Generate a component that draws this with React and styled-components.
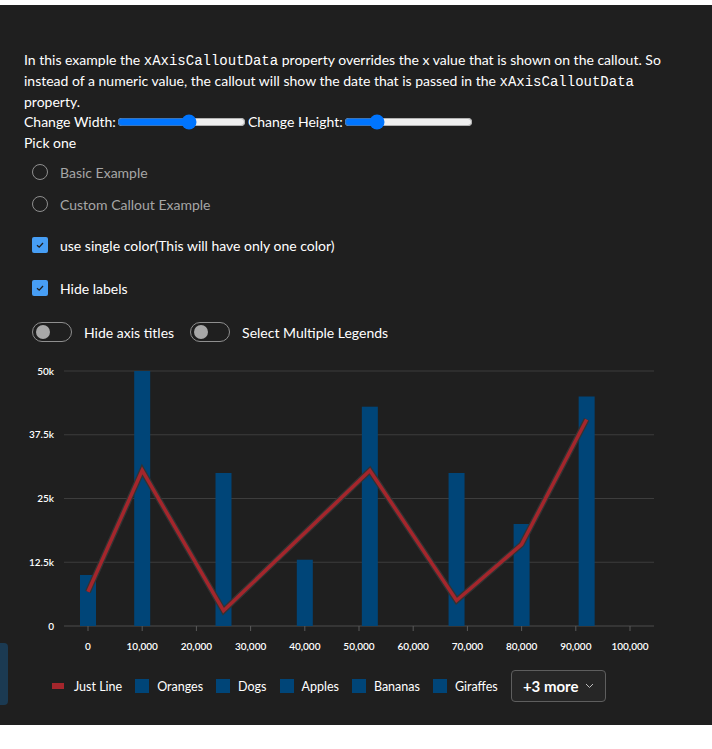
import React from "react";
import styled, { createGlobalStyle } from "styled-components";

const GlobalStyle = createGlobalStyle`
  html, body {
    margin: 0;
    padding: 0;
    background: #ffffff;
  }
  body {
    font-family: "Segoe UI", Lato, "Open Sans", sans-serif;
  }
`;

const Page = styled.div`
  padding-top: 5px;
  width: 712px;
`;

const Panel = styled.div`
  position: relative;
  height: 720px;
  background: #1f1f1f;
  color: #ffffff;
  font-size: 14px;
  box-sizing: border-box;
  padding-top: 44px;
`;

const Content = styled.div`
  padding: 0 24px;
  display: flex;
  flex-direction: column;
`;

const Intro = styled.p`
  margin: 0;
  line-height: 21px;
`;

const Code = styled.code`
  font-family: "Liberation Mono", "Courier New", monospace;
  font-size: 14px;
  line-height: 1;
`;

const SliderRow = styled.div`
  display: flex;
  align-items: center;
  height: 20px;
  line-height: 20px;
`;

const Range = styled.input`
  width: 129px;
  height: 16px;
  margin: 0 2px 0 1px;
`;

const Label = styled.div`
  line-height: 21px;
`;

const RadioGroup = styled.div`
  display: flex;
  flex-direction: column;
  margin-top: 3px;
  padding-left: 8px;
`;

const RadioRow = styled.div`
  display: flex;
  align-items: center;
  height: 32px;
  color: #a6a6a6;
`;

const RadioCircle = styled.span`
  width: 14px;
  height: 14px;
  border: 1px solid #8f8f8f;
  border-radius: 50%;
  margin-right: 12px;
`;

const CheckRow = styled.div`
  display: flex;
  align-items: center;
  height: 20px;
  padding-left: 8px;
  margin-top: ${(p) => p.$gap}px;
`;

const CheckBox = styled.span`
  width: 16px;
  height: 16px;
  border-radius: 2px;
  background: #479ef5;
  margin-right: 12px;
  display: flex;
  align-items: center;
  justify-content: center;
`;

const ToggleRow = styled.div`
  display: flex;
  align-items: center;
  height: 20px;
  padding-left: 8px;
  margin-top: 24px;
`;

const Toggle = styled.span`
  box-sizing: border-box;
  width: 40px;
  height: 20px;
  border: 1px solid #8f8f8f;
  border-radius: 10px;
  display: flex;
  align-items: center;
  padding-left: 3px;
  margin-right: 12px;
  &::after {
    content: "";
    width: 14px;
    height: 14px;
    border-radius: 50%;
    background: #a8a8a8;
  }
`;

const ToggleLabel = styled.span`
  margin-right: 16px;
`;

const Chart = styled.svg`
  display: block;
  margin-top: 13px;
`;

const Legend = styled.div`
  display: flex;
  align-items: center;
  height: 32px;
  margin-top: 15px;
  padding-left: 52px;
  font-size: 12.5px;
`;

const LegendItem = styled.div`
  display: flex;
  align-items: center;
  margin-right: 13px;
`;

const Swatch = styled.span`
  width: ${(p) => (p.$line ? 12 : 14)}px;
  height: ${(p) => (p.$line ? 6 : 14)}px;
  background: ${(p) => p.$color};
  margin-right: ${(p) => (p.$line ? 10 : 8)}px;
`;

const MoreButton = styled.div`
  box-sizing: border-box;
  height: 32px;
  width: 95px;
  border: 1px solid #5e5e5e;
  border-radius: 4px;
  background: #262626;
  display: flex;
  align-items: center;
  justify-content: center;
  gap: 6px;
  font-size: 15px;
  font-weight: 700;
`;

const SideTab = styled.div`
  position: absolute;
  left: 0;
  top: 638px;
  width: 8px;
  height: 62px;
  border-radius: 0 4px 4px 0;
  background: #1b3a52;
`;

const Y0 = 271;
const YH = 255;
const X0 = 88;
const XS = 5.42;

const yPos = (v) => Y0 - (v / 50000) * YH;
const xPos = (v) => X0 + (v / 10000) * XS * 10;

const yTicks = [
  [50000, "50k"],
  [37500, "37.5k"],
  [25000, "25k"],
  [12500, "12.5k"],
  [0, "0"],
];

const xTicks = [0, 10000, 20000, 30000, 40000, 50000, 60000, 70000, 80000, 90000, 100000];

const bars = [
  [0, 10000],
  [10000, 50000],
  [25000, 30000],
  [40000, 13000],
  [52000, 43000],
  [68000, 30000],
  [80000, 20000],
  [92000, 45000],
];

const line = [
  [0, 6700],
  [10000, 30500],
  [25000, 3000],
  [52000, 30500],
  [68000, 5000],
  [80000, 16000],
  [92000, 40500],
];

const legend = ["Oranges", "Dogs", "Apples", "Bananas", "Giraffes"];

const Check = () => (
  <svg width="10" height="10" viewBox="0 0 10 10">
    <path d="M2 5.2 L4.2 7.2 L8 3" fill="none" stroke="#1f1f1f" strokeWidth="1.3" />
  </svg>
);

export default function App() {
  const pts = line.map(([x, y]) => `${xPos(x)},${yPos(y)}`).join(" ");
  return (
    <Page>
      <GlobalStyle />
      <Panel>
        <Content>
          <Intro>
            In this example the <Code>xAxisCalloutData</Code> property overrides the x value that is
            shown on the callout. So instead of a numeric value, the callout will show the date that
            is passed in the <Code>xAxisCalloutData</Code> property.
          </Intro>
          <SliderRow>
            Change Width:
            <Range type="range" min="0" max="100" defaultValue="57" />
            Change Height:
            <Range type="range" min="0" max="100" defaultValue="22" />
          </SliderRow>
          <Label>Pick one</Label>
          <RadioGroup>
            <RadioRow>
              <RadioCircle />
              Basic Example
            </RadioRow>
            <RadioRow>
              <RadioCircle />
              Custom Callout Example
            </RadioRow>
          </RadioGroup>
          <CheckRow $gap={15}>
            <CheckBox>
              <Check />
            </CheckBox>
            use single color(This will have only one color)
          </CheckRow>
          <CheckRow $gap={23}>
            <CheckBox>
              <Check />
            </CheckBox>
            Hide labels
          </CheckRow>
          <ToggleRow>
            <Toggle />
            <ToggleLabel>Hide axis titles</ToggleLabel>
            <Toggle />
            <ToggleLabel>Select Multiple Legends</ToggleLabel>
          </ToggleRow>
        </Content>
        <Chart width="712" height="300" viewBox="0 0 712 300">
          {yTicks.map(([v, t]) => (
            <g key={t}>
              <line x1="64" x2="654" y1={yPos(v)} y2={yPos(v)} stroke={v === 0 ? "#4d4d4d" : "#3d3d3d"} strokeWidth="1" />
              <text
                x="54"
                y={yPos(v) + 3.5}
                textAnchor="end"
                fontSize="10"
                fontWeight="600"
                fill="#ffffff"
                fontFamily="'Segoe UI', Lato, sans-serif"
              >
                {t}
              </text>
            </g>
          ))}
          {bars.map(([x, v]) => (
            <rect key={x} x={xPos(x) - 8} y={yPos(v)} width="16" height={Y0 - yPos(v)} fill="#004578" />
          ))}
          {xTicks.map((v) => (
            <g key={v}>
              <line x1={xPos(v)} x2={xPos(v)} y1={Y0} y2={Y0 + 5} stroke="#5a5a5a" />
              <text
                x={xPos(v)}
                y={Y0 + 24}
                textAnchor="middle"
                fontSize="10"
                fontWeight="600"
                fill="#ffffff"
                fontFamily="'Segoe UI', Lato, sans-serif"
              >
                {v.toLocaleString("en-US")}
              </text>
            </g>
          ))}
          <polyline points={pts} fill="none" stroke="#333333" strokeWidth="6" strokeLinejoin="miter" />
          <polyline points={pts} fill="none" stroke="#a4262c" strokeWidth="3.5" strokeLinejoin="miter" />
        </Chart>
        <Legend>
          <LegendItem>
            <Swatch $line $color="#a4262c" />
            Just Line
          </LegendItem>
          {legend.map((l) => (
            <LegendItem key={l}>
              <Swatch $color="#004578" />
              {l}
            </LegendItem>
          ))}
          <MoreButton>
            +3 more
            <svg width="9" height="6" viewBox="0 0 9 6">
              <path d="M1 1 L4.5 4.5 L8 1" fill="none" stroke="#bdbdbd" strokeWidth="1" />
            </svg>
          </MoreButton>
        </Legend>
        <SideTab />
      </Panel>
    </Page>
  );
}
